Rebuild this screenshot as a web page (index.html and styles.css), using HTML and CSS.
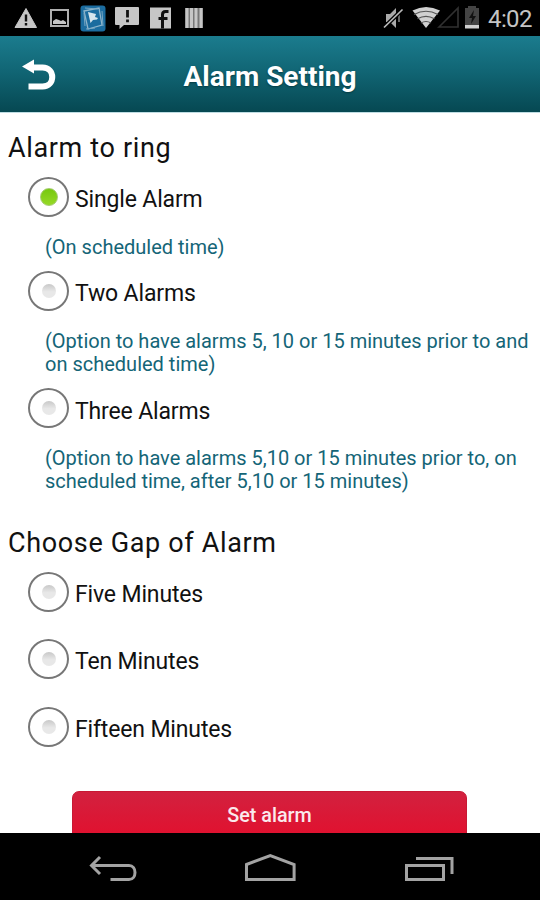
FILE: index.html
```html
<!DOCTYPE html>
<html lang="en">
<head>
<meta charset="utf-8">
<title>Alarm Setting</title>
<link rel="stylesheet" href="styles.css">
</head>
<body>
<div class="screen">
  <div class="status">
    <svg class="status-icons" width="220" height="36" viewBox="0 0 220 36">
      <path d="M26 8.5L36.500 27.500h-21.500z" fill="#c6c6c6" stroke="#c6c6c6" stroke-linejoin="round"/>
      <path d="M26 14.500v7M26 23v2.600" stroke="#111" stroke-width="2.400"/>
      <path d="M51 10h17v16H51z" fill="none" stroke="#b0b0b0" stroke-width="2"/>
      <path d="M53 24v-3l3-2 3 1 2 1 2-1 3 2v2z" fill="#c6c6c6"/>
      <rect x="80.500" y="5.500" width="25" height="26" rx="3" fill="#1b6c9f"/>
      <path d="M84 11l15-3 3 17-14 4z" fill="none" stroke="#8eb5cb" stroke-width="1.300"/>
      <path d="M85 8l13 1M102 11l1 15M84 13l1 13M86 29l9-1" stroke="#7aa8c3"/>
      <path d="M88 12l2.500 11 2.500-3 4-.5 1-1.500-3-1 1-3z" fill="#d6e5ed"/>
      <path d="M116 7h22q1 0 1 1v16q0 1-1 1h-14l-4.500 4V25H116q-1 0-1-1V8q0-1 1-1z" fill="#c6c6c6"/>
      <path d="M127.500 10v7.500M127.500 19.500v2.800" stroke="#111" stroke-width="2.800"/>
      <path d="M150 7.500h21v21H150z" fill="#c6c6c6"/>
      <path d="M162.500 28.500v-14q0-3 3-3h3M158.500 18.500h9" fill="none" stroke="#111" stroke-width="3"/>
      <path d="M185 8h18v20h-18z" fill="#777"/>
      <path d="M187 8v20M191.500 8v20M196 8v20M201 8v20" stroke="#c6c6c6" stroke-width="3"/>
    </svg>
    <svg class="status-icons" width="104" height="36" viewBox="380 0 104 36">
      <path d="M386 14h4l6-6v20l-6-6h-4z" fill="#aaa"/>
      <path d="M399 12v10" stroke="#888" stroke-width="1.500"/>
      <path d="M384 27.500L403 9" stroke="#000" stroke-width="4"/>
      <path d="M384 27.500L402.500 9.500" stroke="#bbb" stroke-width="1.700"/>
      <path d="M412.500 10.500Q426 3.500 440 10.500L426 28z" fill="#d0d0d0"/>
      <path d="M414 14.500q12-6.500 24 0M417.500 18.800q8.500-5 17 0M421 23q5-3 10 0" fill="none" stroke="#555" stroke-width="1.200"/>
      <path d="M439 27L458 8v19z" fill="none" stroke="#303030" stroke-width="1.700"/>
      <path d="M465 8h3V6h8v2h3v20h-14z" fill="#444"/>
      <path d="M474 10l-5 8h3l-1 6 5-8h-3z" fill="#111"/>
      <path d="M465 25h14v3.500h-14z" fill="#d0d0d0"/>
    </svg>
    <span class="clock">4:02</span>
  </div>
  <header class="header">
    <svg class="back" width="36" height="34" viewBox="20 57 36 34">
      <path d="M33 67.500h9.500c13 0 13 19 0 19H28.500" fill="none" stroke="#fff" stroke-width="6"/>
      <path d="M22 66.500l12-7v14z" fill="#fff"/>
    </svg>
    <span class="title">Alarm Setting</span>
  </header>
  <main class="content">
    <h2 class="heading">Alarm to ring</h2>
    <div class="option"><span class="radio on"></span><span class="label">Single Alarm</span></div>
    <p class="hint">(On scheduled time)</p>
    <div class="option"><span class="radio"></span><span class="label">Two Alarms</span></div>
    <p class="hint">(Option to have alarms 5, 10 or 15 minutes prior to and<br>on scheduled time)</p>
    <div class="option"><span class="radio"></span><span class="label">Three Alarms</span></div>
    <p class="hint">(Option to have alarms 5,10 or 15 minutes prior to, on<br>scheduled time, after 5,10 or 15 minutes)</p>
    <h2 class="heading second">Choose Gap of Alarm</h2>
    <div class="gaps">
      <div class="option"><span class="radio"></span><span class="label">Five Minutes</span></div>
      <div class="option"><span class="radio"></span><span class="label">Ten Minutes</span></div>
      <div class="option"><span class="radio"></span><span class="label">Fifteen Minutes</span></div>
    </div>
    <div class="button">Set alarm</div>
  </main>
  <nav class="nav">
    <svg width="540" height="67" viewBox="0 833 540 67" fill="none" stroke="#a3a3a3" stroke-width="3">
      <path d="M91 865.500h38c8 0 8 14 0 14h-18.500M100 857l-8.500 8.500 8.500 8.500"/>
      <path d="M246.500 864.500l23.800-9 23.800 9v15h-47.600z"/>
      <path d="M406.500 865.500h37v14h-37zM416 858.500h36V874"/>
    </svg>
  </nav>
</div>
</body>
</html>
```
FILE: styles.css
```css
* { box-sizing: border-box; margin: 0; padding: 0; }
body { background: #fff; font-family: Roboto, "Liberation Sans", sans-serif; color: #111; }
.screen { width: 540px; height: 900px; display: flex; flex-direction: column; overflow: hidden; }
.status { height: 36px; background: #000; display: flex; justify-content: space-between; flex: none; }
.status-icons { display: block; flex: none; }
.status-icons + .status-icons { margin-left: auto; }
.clock { width: 56px; padding-left: 4px; font-size: 24px; line-height: 38px; color: #c4c4c4; white-space: nowrap; letter-spacing: -0.6px; }
.header { height: 77px; flex: none; display: flex; align-items: center; padding: 0 20px; background: linear-gradient(#1b7c8e, #116675 45%, #064852); border-bottom: 1px solid #bfdde3; }
.back { display: block; flex: none; }
.title { flex: 1; margin-right: 36px; text-align: center; font-size: 28px; line-height: 36px; font-weight: 700; color: #fff; text-shadow: 0 1px 2px #053a42; padding-top: 6px; white-space: nowrap; }
.content { flex: 1; min-height: 0; overflow: hidden; display: flex; flex-direction: column; padding-top: 17px; }
.content > * { flex: none; }
.heading { padding-left: 8px; font-size: 27px; line-height: 36px; font-weight: 400; letter-spacing: 0.65px; margin-bottom: 11px; }
.second { margin-top: 19px; }
.option { height: 40px; display: flex; align-items: center; padding-left: 28px; }
.radio { width: 41px; height: 40px; flex: none; border: 2px solid #777; border-radius: 50%; display: flex; align-items: center; justify-content: center; }
.radio::after { content: ""; width: 14px; height: 14px; border-radius: 50%; background: linear-gradient(#c8c8c8, #e8e8e8 55%); }
.radio.on::after { width: 16px; height: 16px; background: linear-gradient(#76c80e, #96d926); border: 1px solid #a5cc70; }
.label { margin-left: 6px; padding-top: 6.5px; font-size: 23px; line-height: 30px; letter-spacing: -0.15px; white-space: nowrap; }
.hint { padding-left: 45px; margin: 18.7px 0 12.2px; font-size: 20px; line-height: 23.2px; color: #146577; white-space: nowrap; }
.second + .gaps { display: grid; row-gap: 27.5px; }
.button { width: 395px; height: 64px; margin: 44px 0 0 72px; border-radius: 7px; border: 1px solid #c71934; background: linear-gradient(#d2213f, #e01230 65%); color: #fbe9ec; font-size: 19.8px; line-height: 48px; font-weight: 500; text-align: center; }
.nav { height: 67px; flex: none; background: #000; }
.nav svg { display: block; }
```
